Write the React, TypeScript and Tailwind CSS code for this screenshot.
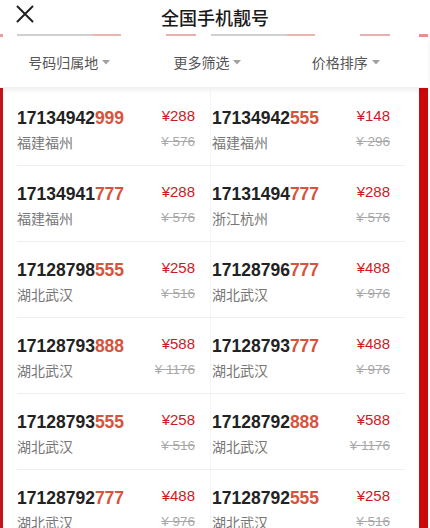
import React from "react";

type Item = { head: string; tail: string; price: string; loc: string; orig: string };

const rows: [Item, Item][] = [
  [
    { head: "17134942", tail: "999", price: "288", loc: "福建福州", orig: "576" },
    { head: "17134942", tail: "555", price: "148", loc: "福建福州", orig: "296" },
  ],
  [
    { head: "17134941", tail: "777", price: "288", loc: "福建福州", orig: "576" },
    { head: "17131494", tail: "777", price: "288", loc: "浙江杭州", orig: "576" },
  ],
  [
    { head: "17128798", tail: "555", price: "258", loc: "湖北武汉", orig: "516" },
    { head: "17128796", tail: "777", price: "488", loc: "湖北武汉", orig: "976" },
  ],
  [
    { head: "17128793", tail: "888", price: "588", loc: "湖北武汉", orig: "1176" },
    { head: "17128793", tail: "777", price: "488", loc: "湖北武汉", orig: "976" },
  ],
  [
    { head: "17128793", tail: "555", price: "258", loc: "湖北武汉", orig: "516" },
    { head: "17128792", tail: "888", price: "588", loc: "湖北武汉", orig: "1176" },
  ],
  [
    { head: "17128792", tail: "777", price: "488", loc: "湖北武汉", orig: "976" },
    { head: "17128792", tail: "555", price: "258", loc: "湖北武汉", orig: "516" },
  ],
];

const latin = "font-['Liberation_Sans','Noto_Sans_CJK_SC',sans-serif]";
const cjk = "font-['Noto_Sans_CJK_SC','Liberation_Sans',sans-serif]";

function Cell({ item, right }: { item: Item; right?: boolean }) {
  return (
    <div
      className={`h-[76px] w-[194px] border-b border-[#efefef] pr-[15px] pt-[17px] ${
        right ? "pl-[1px]" : "border-r border-r-[#f4f4f4]"
      }`}
    >
      <div className="flex items-start justify-between">
        <span className={`${latin} text-[17.5px] font-bold leading-[22px] text-[#222]`}>
          {item.head}
          <span className="text-[#d6533c]">{item.tail}</span>
        </span>
        <span className={`${latin} text-[15px] leading-[18px] text-[#cc1a1f]`}>¥{item.price}</span>
      </div>
      <div className="mt-[3px] flex items-center justify-between">
        <span className={`${cjk} text-[14px] leading-[20px] text-[#777]`}>{item.loc}</span>
        <span className={`${latin} text-[13.5px] leading-[20px] text-[#a8a8a8] line-through`}>
          ¥ {item.orig}
        </span>
      </div>
    </div>
  );
}

// the bottom edge of the row that has scrolled under the filter bar
function PeekEdge() {
  return (
    <div className="flex h-[3px] w-[194px] items-start pr-[15px]">
      <div className="h-[2px] w-[76px] bg-[#d0d0d0]" />
      <div className="h-[2px] w-[28px] bg-[#ecb6ac]" />
      <div className="flex-1" />
      <div className="h-[2px] w-[30px] bg-[#eab0b0]" />
    </div>
  );
}

function Caret() {
  return (
    <svg width="8" height="5" viewBox="0 0 8 5" className="ml-[4px]">
      <path d="M0 0 L8 0 L4 4.5 Z" fill="#a0a0a0" />
    </svg>
  );
}

export default function App() {
  return (
    <div className="relative h-[528px] w-[430px] overflow-hidden bg-white">
      {/* header */}
      <div className="relative flex h-[34px] items-center justify-center bg-white">
        <svg width="18" height="18" viewBox="0 0 18 18" className="absolute left-[16px] top-[5px]">
          <path d="M1.5 1.5 L16.5 16.5 M16.5 1.5 L1.5 16.5" stroke="#222" strokeWidth="2" strokeLinecap="round" />
        </svg>
        <span className={`${cjk} text-[18px] font-medium leading-[28px] text-[#1a1a1a]`}>全国手机靓号</span>
      </div>

      {/* scrolled content peeking under the filter bar */}
      <div className="flex h-[3px] overflow-hidden">
        <div className="w-[3px] bg-[#e8a0a0]" />
        <div className="flex w-[402px] pl-[14px]">
          <PeekEdge />
          <PeekEdge />
        </div>
        <div className="w-[14px]" />
        <div className="w-[9px] bg-[#e89090]" />
      </div>

      {/* filter bar */}
      <div className="relative z-10 h-[50px] w-[428px] bg-white shadow-[0_3px_5px_rgba(0,0,0,0.07)]">
        <div className="grid h-full w-[415px] grid-cols-3">
          {["号码归属地", "更多筛选", "价格排序"].map((label) => (
            <div key={label} className="flex items-center justify-center">
              <span className={`${cjk} text-[14px] leading-[20px] text-[#555]`}>{label}</span>
              <Caret />
            </div>
          ))}
        </div>
      </div>

      {/* list */}
      <div className="flex">
        <div className="mt-[1px] w-[3px] bg-[#c4141b]" />
        <div className="w-[402px] pl-[14px] pt-[3px]">
          {rows.map((pair, i) => (
            <div key={i} className="flex">
              <Cell item={pair[0]} />
              <Cell item={pair[1]} right />
            </div>
          ))}
        </div>
        <div className="w-[14px]" />
        <div className="mt-[1px] w-[9px] bg-[#cc0a0a]" />
      </div>
    </div>
  );
}
